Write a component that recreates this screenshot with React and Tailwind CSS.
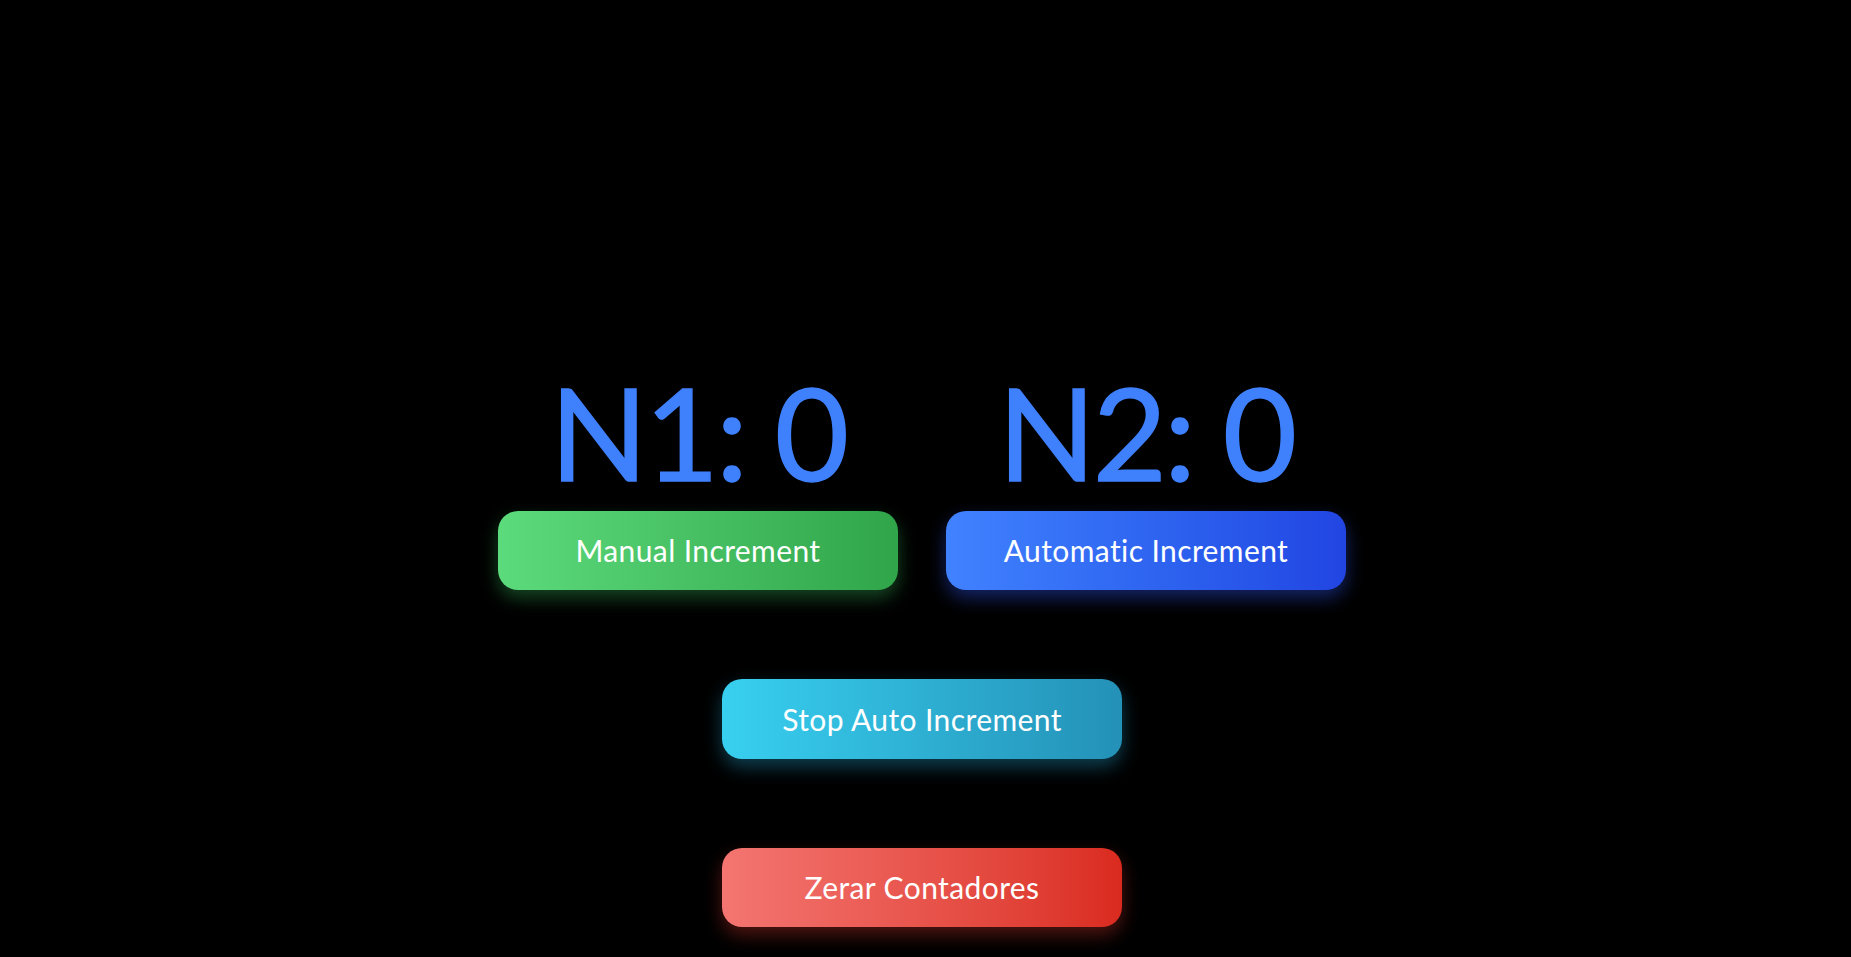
export default function App() {
  const btn =
    'h-[79px] w-[400px] rounded-[20px] text-[30px] tracking-[0.4px] text-white flex items-center justify-center';

  return (
    <div
      className="min-h-screen w-full bg-black flex flex-col items-center pt-[362px] pr-[7px]"
      style={{ fontFamily: 'Lato, "Noto Sans", sans-serif' }}
    >
      <div className="flex gap-[49px]">
        <div className="w-[399px] flex flex-col items-center">
          <h1 className="text-[128px] leading-[140px] tracking-[-3px] text-[#3f80fd] whitespace-nowrap [-webkit-text-stroke:1.5px_#3f80fd]">
            N1: 0
          </h1>
          <button
            className={`${btn} mt-[9px] bg-gradient-to-r from-[#5cdb7c] to-[#30a54a] shadow-[0_8px_18px_rgba(60,200,100,0.35)]`}
          >
            Manual Increment
          </button>
        </div>
        <div className="w-[399px] flex flex-col items-center">
          <h1 className="text-[128px] leading-[140px] tracking-[-3px] text-[#3f80fd] whitespace-nowrap [-webkit-text-stroke:1.5px_#3f80fd]">
            N2: 0
          </h1>
          <button
            className={`${btn} mt-[9px] bg-gradient-to-r from-[#4182ff] to-[#2245e2] shadow-[0_8px_18px_rgba(50,90,255,0.4)]`}
          >
            Automatic Increment
          </button>
        </div>
      </div>

      <button
        className={`${btn} mt-[89px] h-[80px] bg-gradient-to-r from-[#38d0f0] to-[#2491b7] shadow-[0_8px_18px_rgba(40,180,230,0.35)]`}
      >
        Stop Auto Increment
      </button>

      <button
        className={`${btn} mt-[89px] h-[77px] bg-gradient-to-r from-[#f47571] to-[#da2a1f] shadow-[0_8px_18px_rgba(230,60,50,0.35)]`}
      >
        Zerar Contadores
      </button>
    </div>
  );
}
